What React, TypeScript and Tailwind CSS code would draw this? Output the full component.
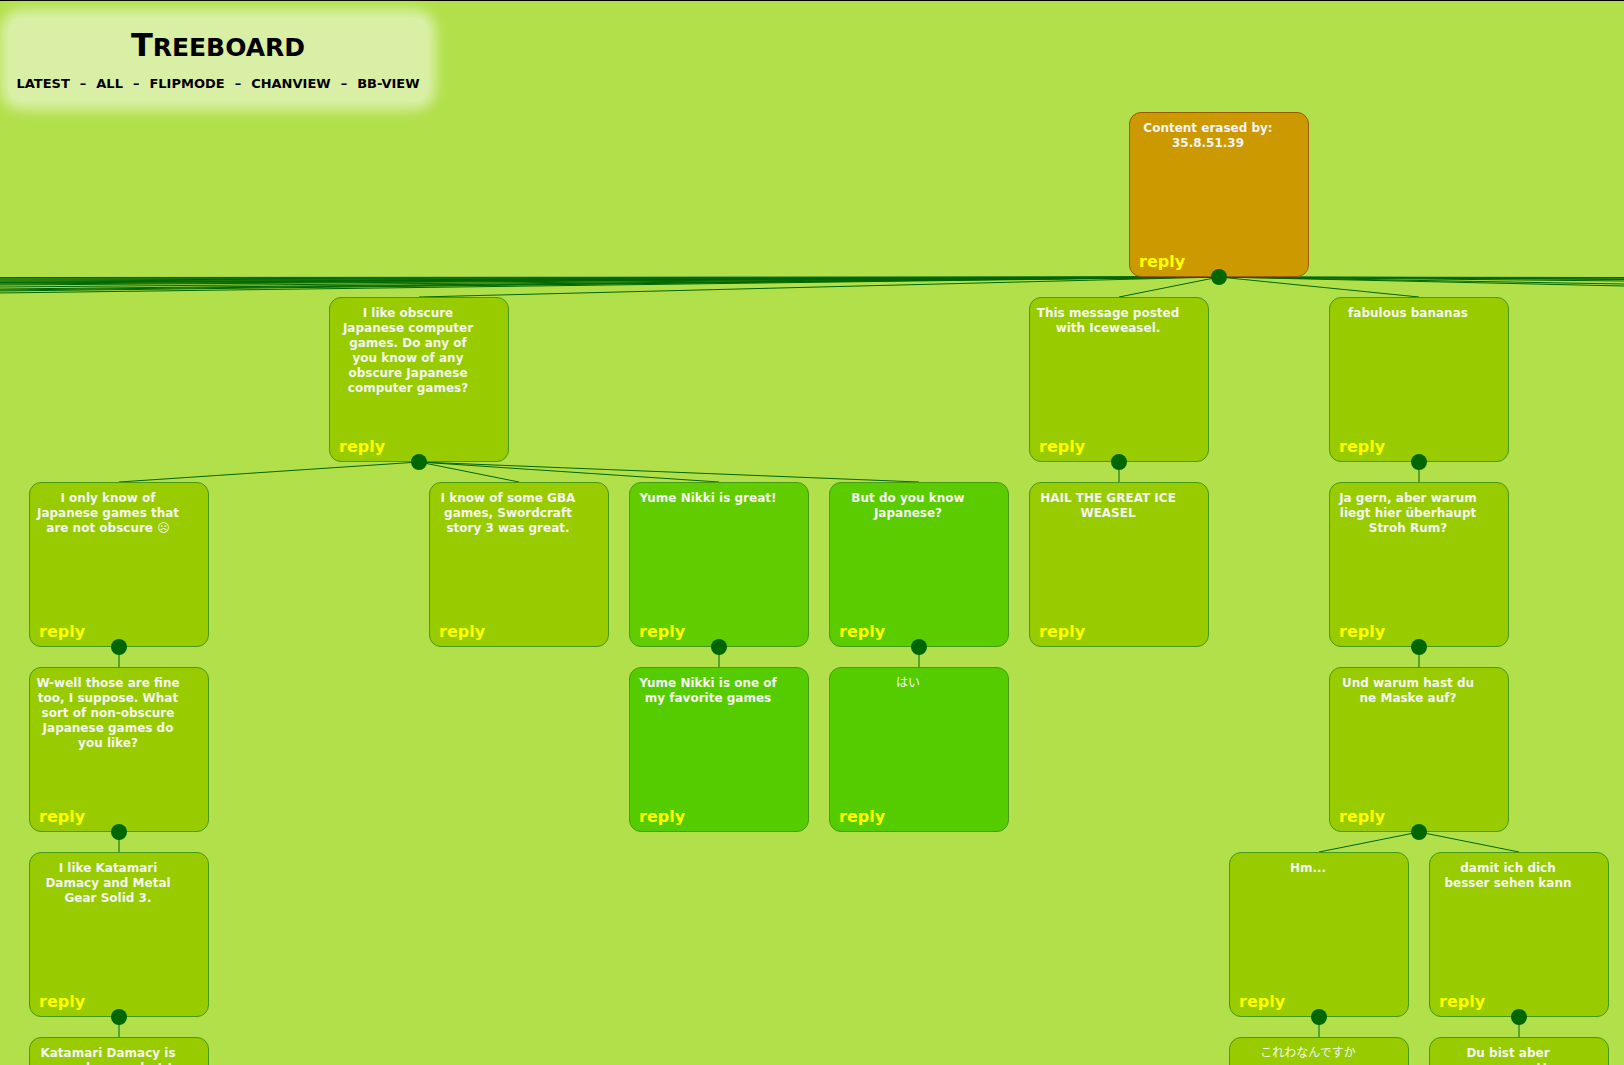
import React from "react";

type Post = {
  id: string;
  x: number;
  lvl: number;
  lines: string[];
  parent?: string;
  bg?: string;
  jp?: boolean;
};

const TOPS = [112, 297, 482, 667, 852, 1037];
const NODE_W = 180;
const NODE_H = 165;

const posts: Post[] = [
  { id: "root", x: 1129, lvl: 0, lines: ["Content erased by:", "35.8.51.39"], bg: "#cc9900" },
  {
    id: "obscure",
    parent: "root",
    x: 329,
    lvl: 1,
    lines: ["I like obscure", "Japanese computer", "games. Do any of", "you know of any", "obscure Japanese", "computer games?"],
  },
  { id: "iceweasel", parent: "root", x: 1029, lvl: 1, lines: ["This message posted", "with Iceweasel."] },
  { id: "bananas", parent: "root", x: 1329, lvl: 1, lines: ["fabulous bananas"] },
  { id: "only", parent: "obscure", x: 29, lvl: 2, lines: ["I only know of", "Japanese games that", "are not obscure \u2639"] },
  { id: "gba", parent: "obscure", x: 429, lvl: 2, lines: ["I know of some GBA", "games, Swordcraft", "story 3 was great."] },
  { id: "yume", parent: "obscure", x: 629, lvl: 2, lines: ["Yume Nikki is great!"], bg: "#61cc00" },
  { id: "knowjp", parent: "obscure", x: 829, lvl: 2, lines: ["But do you know", "Japanese?"], bg: "#5acc00" },
  { id: "hail", parent: "iceweasel", x: 1029, lvl: 2, lines: ["HAIL THE GREAT ICE", "WEASEL"] },
  { id: "jagern", parent: "bananas", x: 1329, lvl: 2, lines: ["Ja gern, aber warum", "liegt hier \u00fcberhaupt", "Stroh Rum?"] },
  {
    id: "wwell",
    parent: "only",
    x: 29,
    lvl: 3,
    lines: ["W-well those are fine", "too, I suppose. What", "sort of non-obscure", "Japanese games do", "you like?"],
  },
  { id: "yume2", parent: "yume", x: 629, lvl: 3, lines: ["Yume Nikki is one of", "my favorite games"], bg: "#55cc00" },
  { id: "hai", parent: "knowjp", x: 829, lvl: 3, lines: ["\u306f\u3044"], bg: "#55cc00", jp: true },
  { id: "maske", parent: "jagern", x: 1329, lvl: 3, lines: ["Und warum hast du", "ne Maske auf?"] },
  { id: "katamari", parent: "wwell", x: 29, lvl: 4, lines: ["I like Katamari", "Damacy and Metal", "Gear Solid 3."] },
  { id: "hm", parent: "maske", x: 1229, lvl: 4, lines: ["Hm..."] },
  { id: "damit", parent: "maske", x: 1429, lvl: 4, lines: ["damit ich dich", "besser sehen kann"] },
  { id: "katamari2", parent: "katamari", x: 29, lvl: 5, lines: ["Katamari Damacy is", "a good game, but I"] },
  { id: "kore", parent: "hm", x: 1229, lvl: 5, lines: ["\u3053\u308c\u308f\u306a\u3093\u3067\u3059\u304b"], jp: true },
  { id: "dubist", parent: "damit", x: 1429, lvl: 5, lines: ["Du bist aber", "vermummt!"] },
];

// other replies to the root that sit off the visible canvas (their lines still cross it)
const OFF_LEFT = [-305, -522, -656, -813, -1219, -1829, -2264, -2844, -3214, -3657, -4876, -6908, -10971, -23161, -47541];
const OFF_RIGHT = [2119, 2376, 3244, 4459, 5269, 9319, 17419];

const NAV = ["Latest", "All", "Flipmode", "Chanview", "BB-View"];

function PostBox({ post, hasKids }: { post: Post; hasKids: boolean }) {
  const erased = post.id === "root";
  return (
    <div
      className={`absolute w-[180px] h-[165px] rounded-[12px] border flex flex-col justify-between ${
        erased ? "border-[#9a5a00]" : "border-[#46991a]"
      }`}
      style={{ left: post.x, top: TOPS[post.lvl], backgroundColor: post.bg ?? "#99cc00" }}
    >
      <div
        className={`ml-[6px] mt-[8px] w-[144px] text-center text-[12px] leading-[15px] text-[#f4f4f4] whitespace-nowrap ${
          post.jp ? "font-normal" : "font-bold"
        }`}
      >
        {post.lines.map((l, i) => (
          <div key={i}>{l}</div>
        ))}
      </div>
      <div className="pl-[9px] pb-[5px] text-[16px] font-bold text-[#ffff00] leading-[normal]">reply</div>
      {hasKids && (
        <div className="absolute left-1/2 -bottom-[9px] -translate-x-1/2 w-[16px] h-[16px] rounded-full bg-[#006600] z-10" />
      )}
    </div>
  );
}

export default function App() {
  const byId: Record<string, Post> = Object.fromEntries(posts.map((p) => [p.id, p]));
  const parents = new Set(posts.filter((p) => p.parent).map((p) => p.parent as string));
  parents.add("root");

  const root = byId["root"];
  const rootX = root.x + NODE_W / 2;
  const rootY = TOPS[0] + NODE_H;

  const edges = posts
    .filter((p) => p.parent)
    .map((p) => {
      const par = byId[p.parent as string];
      return {
        x1: par.x + NODE_W / 2,
        y1: TOPS[par.lvl] + NODE_H,
        x2: p.x + NODE_W / 2,
        y2: TOPS[p.lvl],
      };
    });
  [...OFF_LEFT, ...OFF_RIGHT].forEach((cx) => edges.push({ x1: rootX, y1: rootY, x2: cx, y2: TOPS[1] }));

  return (
    <div className="relative w-[1624px] h-[1065px] overflow-hidden bg-[#b2e04b] shadow-[inset_0_1px_0_#000] font-['DejaVu_Sans','Noto_Sans_CJK_JP',sans-serif]">
      <svg className="absolute left-0 top-0" width={1624} height={1065}>
        {edges.map((e, i) => (
          <line key={i} x1={e.x1} y1={e.y1} x2={e.x2} y2={e.y2} stroke="#006600" strokeWidth={1} />
        ))}
      </svg>

      {posts.map((p) => (
        <PostBox key={p.id} post={p} hasKids={parents.has(p.id)} />
      ))}

      {/* header */}
      <div className="absolute left-[8px] top-[17px] w-[420px] h-[85px] rounded-[14px] bg-[#d9efa5] shadow-[0_0_12px_8px_#d9efa5] flex flex-col items-center pt-[9px] text-black">
        <div className="font-bold leading-[normal] text-[32px]">
          T<span className="text-[25px]">REEBOARD</span>
        </div>
        <div className="mt-[12px] flex items-center text-[13px] font-bold uppercase leading-[normal]">
          {NAV.map((n, i) => (
            <React.Fragment key={n}>
              {i > 0 && <span className="mx-[10px]">&ndash;</span>}
              <span>{n}</span>
            </React.Fragment>
          ))}
        </div>
      </div>
    </div>
  );
}
